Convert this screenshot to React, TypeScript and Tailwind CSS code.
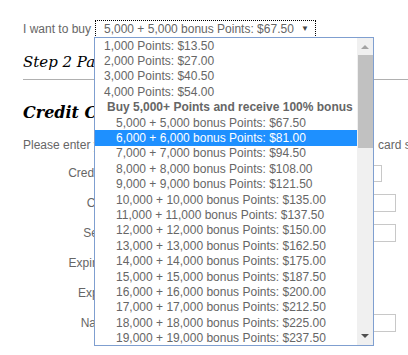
import React from "react";

const plain = ["1,000 Points: $13.50", "2,000 Points: $27.00", "3,000 Points: $40.50", "4,000 Points: $54.00"];
const bonus = [
  ["5,000", "67.50"], ["6,000", "81.00"], ["7,000", "94.50"], ["8,000", "108.00"], ["9,000", "121.50"],
  ["10,000", "135.00"], ["11,000", "137.50"], ["12,000", "150.00"], ["13,000", "162.50"], ["14,000", "175.00"],
  ["15,000", "187.50"], ["16,000", "200.00"], ["17,000", "212.50"], ["18,000", "225.00"], ["19,000", "237.50"],
];

const rows: [string, string][] = [
  ["Credit Card Type:", "sel"],
  ["Card Number:", "in"],
  ["Security Code:", "in"],
  ["Expiration Month:", "none"],
  ["Expiration Year:", "none"],
  ["Name on Card:", "in"],
];

export default function App() {
  return (
    <div className="relative w-[408px] h-[355px] overflow-hidden bg-white text-[12px] text-[#666]" style={{ fontFamily: '"Liberation Sans", Arial, sans-serif' }}>
      <div className="pl-[23px] pt-[19px]">
        <div className="flex items-center h-[19px] whitespace-nowrap">
          <span className="w-[72px]">I want to buy</span>
          <div className="w-[221px] h-[18px] border border-dotted border-black flex items-center pl-[8px] pr-[6px] justify-between">
            <span>5,000 + 5,000 bonus Points: $67.50</span>
            <span className="text-[8px] text-[#444]">▼</span>
          </div>
        </div>
        <div className="mt-[13px] h-[22px] flex items-center italic text-black whitespace-nowrap" style={{ fontFamily: '"DejaVu Serif", Georgia, serif' }}>
          <span className="text-[15px]">Step 2 Payment</span>
        </div>
        <div className="mt-[6px] h-px bg-[#b0b0b0]" />
        <div className="mt-[22px] h-[22px] flex items-center italic font-bold text-black whitespace-nowrap" style={{ fontFamily: '"DejaVu Serif", Georgia, serif' }}>
          <span className="text-[16px]">Credit Card</span>
        </div>
        <div className="mt-[13px] h-[15px] flex items-center whitespace-nowrap">
          <span className="w-[355px] shrink-0 overflow-hidden">Please enter your information below. Your credit</span>
          <span>card statement</span>
        </div>
        <div className="mt-[6px] flex flex-col">
          {rows.map(([l, t]) => (
            <div key={l} className="flex items-center h-[30px] whitespace-nowrap">
              <div className="w-[139px] flex justify-end">
                <span>{l}</span>
              </div>
              {t === "sel" && <div className="ml-[6px] w-[214px] h-[17px] border border-[#c8c8c8]" />}
              {t === "in" && <div className="ml-[6px] w-[228px] h-[18px] border border-[#c8c8c8]" />}
            </div>
          ))}
        </div>
      </div>

      <div className="absolute left-[94px] top-[37px] w-[280px] h-[309px] border border-[#7f9fd0] bg-white flex">
        <div className="flex-1 flex flex-col">
          {plain.map((p) => (
            <div key={p} className="h-[15.4px] flex items-center pl-[9px] whitespace-nowrap">{p}</div>
          ))}
          <div className="h-[15.4px] flex items-center pl-[12px] font-bold whitespace-nowrap">Buy 5,000+ Points and receive 100% bonus</div>
          {bonus.map(([n, p]) => (
            <div key={n} className={`h-[15.4px] flex items-center pl-[21px] whitespace-nowrap ${n === "6,000" ? "bg-[#1e90ff] text-white" : ""}`}>
              {n} + {n} bonus Points: ${p}
            </div>
          ))}
        </div>
        <div className="w-[16px] bg-[#f0f0f0] flex flex-col items-center">
          <div className="h-[17px] flex items-center justify-center">
            <svg width="8" height="5" viewBox="0 0 8 5"><path d="M0 5 L4 1 L8 5 Z" fill="#a3a3a3" /></svg>
          </div>
          <div className="w-[15px] h-[93px] bg-[#c1c1c1]" />
          <div className="flex-1" />
          <div className="h-[17px] flex items-center justify-center">
            <svg width="8" height="5" viewBox="0 0 8 5"><path d="M0 0 L4 4 L8 0 Z" fill="#505050" /></svg>
          </div>
        </div>
      </div>
    </div>
  );
}
